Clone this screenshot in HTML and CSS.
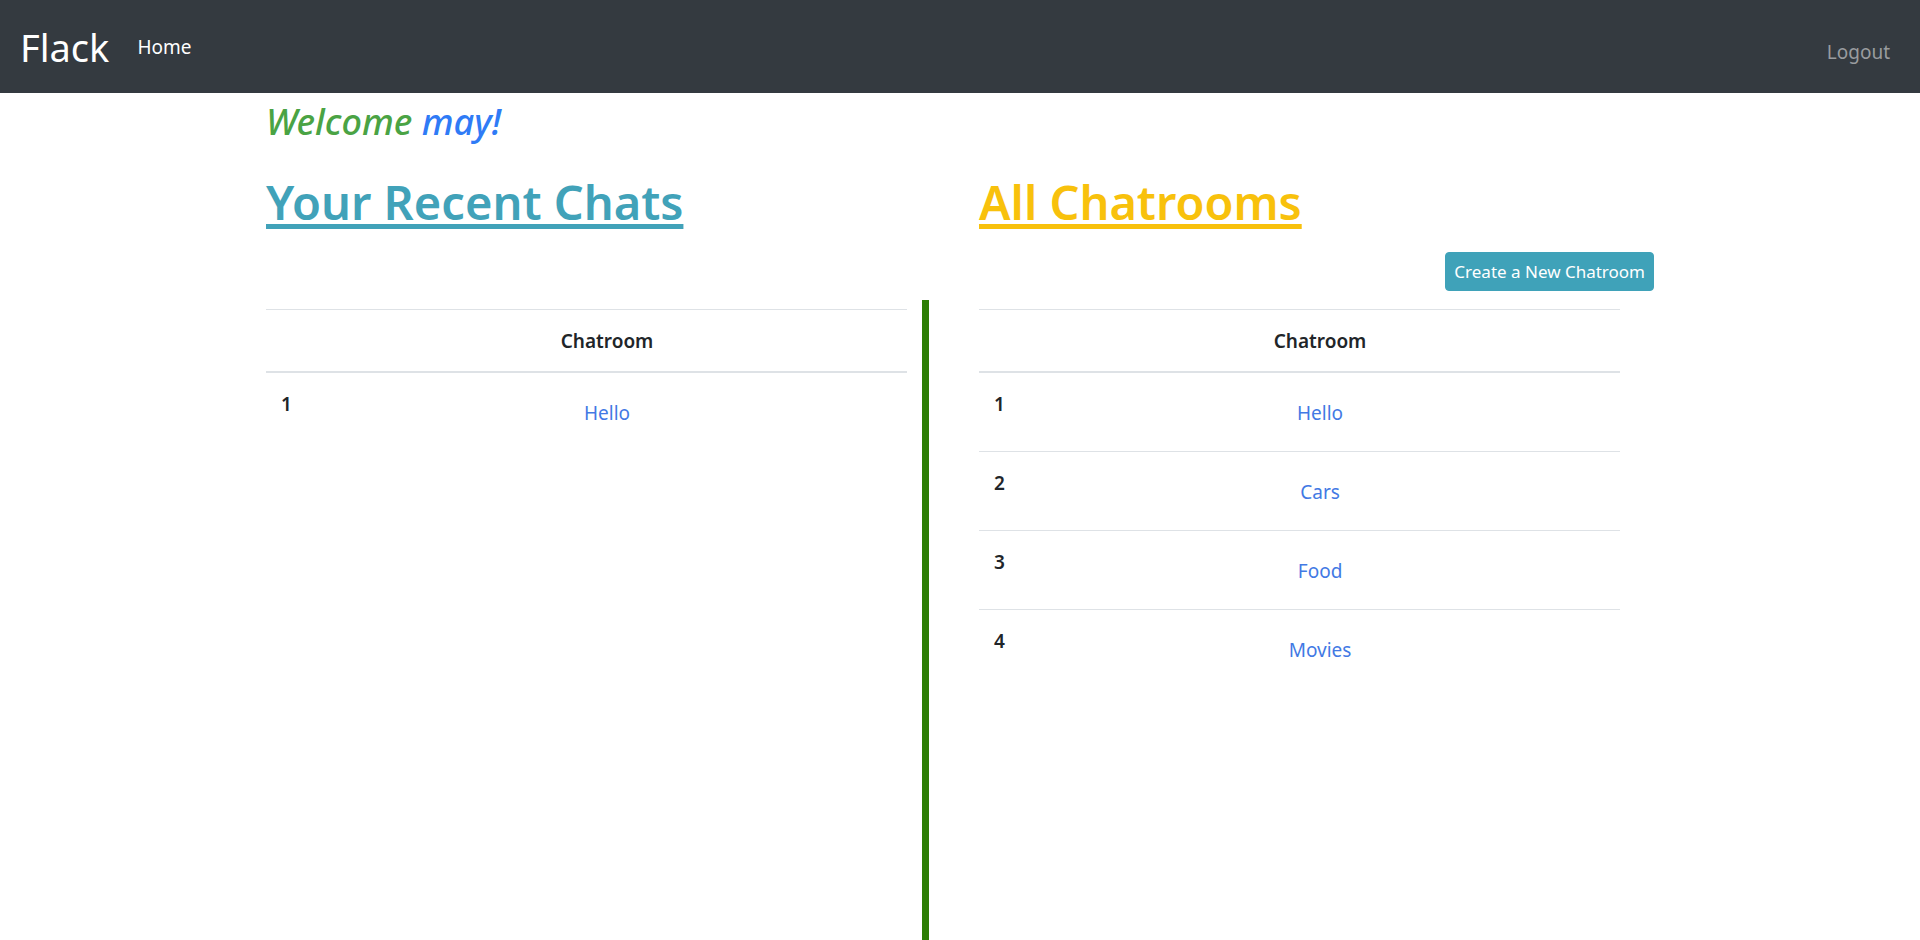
FILE: index.html
```
<!DOCTYPE html>
<html lang="en">
<head>
  <meta charset="utf-8">
  <meta name="viewport" content="width=device-width, initial-scale=1">
  <title>Flack</title>
  <link rel="stylesheet" href="styles.css">
</head>
<body>
  <nav class="navbar">
    <a class="brand" href="#">Flack</a>
    <a class="nav-link active" href="#">Home</a>
    <a class="nav-link logout" href="#">Logout</a>
  </nav>

  <main class="container">
    <h3 class="welcome">Welcome <span class="username">may!</span></h3>

    <div class="columns">
      <section class="column">
        <h1 class="title recent">Your Recent Chats</h1>
        <div class="toolbar"></div>
        <div class="panel divided">
          <table class="rooms">
            <thead>
              <tr><th></th><th scope="col">Chatroom</th></tr>
            </thead>
            <tbody>
              <tr><th scope="row">1</th><td><a href="#">Hello</a></td></tr>
            </tbody>
          </table>
        </div>
      </section>

      <section class="column">
        <h1 class="title all">All Chatrooms</h1>
        <div class="toolbar">
          <button class="create" type="button">Create a New Chatroom</button>
        </div>
        <div class="panel">
          <table class="rooms">
            <thead>
              <tr><th></th><th scope="col">Chatroom</th></tr>
            </thead>
            <tbody>
              <tr><th scope="row">1</th><td><a href="#">Hello</a></td></tr>
              <tr><th scope="row">2</th><td><a href="#">Cars</a></td></tr>
              <tr><th scope="row">3</th><td><a href="#">Food</a></td></tr>
              <tr><th scope="row">4</th><td><a href="#">Movies</a></td></tr>
            </tbody>
          </table>
        </div>
      </section>
    </div>
  </main>
</body>
</html>
```
FILE: styles.css
```
* {
  box-sizing: border-box;
}

body {
  display: flex;
  flex-direction: column;
  min-height: 100vh;
  margin: 0;
  background: #fff;
  color: #212529;
  font-family: "Segoe UI", "Noto Sans", sans-serif;
  font-size: 19px;
  line-height: 30px;
}

a {
  text-decoration: none;
}

.navbar {
  display: flex;
  align-items: center;
  padding: 17px 30px 16px 20px;
  background: #343a40;
}

.brand {
  margin-right: 28px;
  color: #fff;
  font-size: 38px;
  line-height: 60px;
}

.nav-link {
  color: #999c9f;
}

.nav-link.active {
  color: #fff;
}

.logout {
  margin-left: auto;
  padding-top: 10px;
}

.container {
  display: flex;
  flex: 1;
  flex-direction: column;
  width: 100%;
  max-width: 1426px;
  margin: 0 auto;
  padding: 0 19px;
}

.welcome {
  margin: 8px 0 20px;
  color: #4aa344;
  font-size: 36px;
  font-style: italic;
  font-weight: 500;
  line-height: 42px;
}

.username {
  color: #2f7bf6;
}

.columns {
  display: grid;
  flex: 1;
  grid-template-columns: 1fr 1fr;
  column-gap: 38px;
}

.column {
  display: flex;
  flex-direction: column;
}

.title {
  margin: 9px 0 20px;
  font-size: 47px;
  font-weight: 600;
  line-height: 60px;
  text-decoration: underline;
  text-decoration-thickness: 5px;
  text-decoration-skip-ink: none;
  text-underline-offset: 4px;
}

.recent {
  color: #41a2b9;
}

.all {
  color: #f8c10c;
}

.toolbar {
  display: flex;
  justify-content: flex-end;
  height: 48px;
}

.create {
  height: 39px;
  padding: 0 8px;
  border: 1px solid #3fa2b9;
  border-radius: 4px;
  background: #3fa2b9;
  color: #fff;
  font-family: inherit;
  font-size: 17px;
  line-height: 26px;
}

.panel {
  width: 95%;
  padding-top: 9px;
}

.divided {
  flex: 1;
  box-sizing: content-box;
  padding-right: 15px;
  border-right: 7px solid #2c7e04;
}

.rooms {
  width: 100%;
  border-collapse: collapse;
}

.rooms th,
.rooms td {
  padding: 16px 15px 15px;
  border-top: 1px solid #dee2e6;
  text-align: center;
  vertical-align: top;
}

.rooms thead th {
  border-bottom: 2px solid #dee2e6;
}

.rooms th {
  font-weight: 600;
}

.rooms td {
  width: 100%;
  padding: 25px 15px 23px;
}

.rooms a {
  color: #4279e4;
}
```
